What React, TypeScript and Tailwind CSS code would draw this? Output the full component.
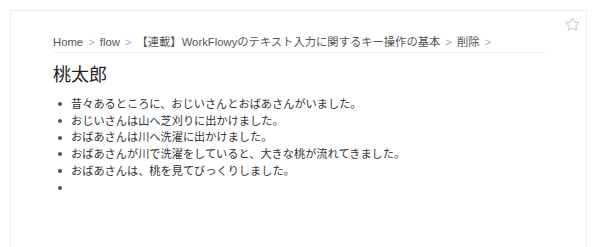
import { Star } from 'lucide-react';

const crumbs = ['Home', 'flow', '【連載】WorkFlowyのテキスト入力に関するキー操作の基本', '削除'];

const items = [
  '昔々あるところに、おじいさんとおばあさんがいました。',
  'おじいさんは山へ芝刈りに出かけました。',
  'おばあさんは川へ洗濯に出かけました。',
  'おばあさんが川で洗濯をしていると、大きな桃が流れてきました。',
  'おばあさんは、桃を見てびっくりしました。',
  '',
];

export default function App() {
  return (
    <div className="w-[599px] h-[247px] overflow-hidden bg-white font-['Liberation_Sans','Noto_Sans_CJK_JP',sans-serif] text-[#333]">
      <div className="relative ml-[10px] mt-[10px] mr-[12px] h-[260px] border border-[#ececec] pl-[42px] pr-[41px] pt-[23px]">
        <Star className="absolute right-[6px] top-[6px] text-[#b8b8b8]" size={15} strokeWidth={1.4} />

        {/* breadcrumb */}
        <div className="flex items-center border-b border-[#f0f0f0] pb-[2px] text-[11.3px] leading-[16px] text-[#555]">
          {crumbs.map((c, i) => (
            <span key={i} className="flex items-center">
              <span>{c}</span>
              <span className="mx-[5px] text-[#aaa]">&gt;</span>
            </span>
          ))}
        </div>

        <h1 className="mt-[11px] text-[18px] leading-[22px] text-[#222]">桃太郎</h1>

        <ul className="mt-[10px] text-[11.2px] leading-[16.7px] text-[#333]">
          {items.map((t, i) => (
            <li key={i} className="flex h-[16.7px] items-center">
              <span className="ml-[5px] mr-[9px] h-[4px] w-[4px] shrink-0 rounded-full bg-[#555]" />
              <span>{t}</span>
            </li>
          ))}
        </ul>
      </div>
    </div>
  );
}
